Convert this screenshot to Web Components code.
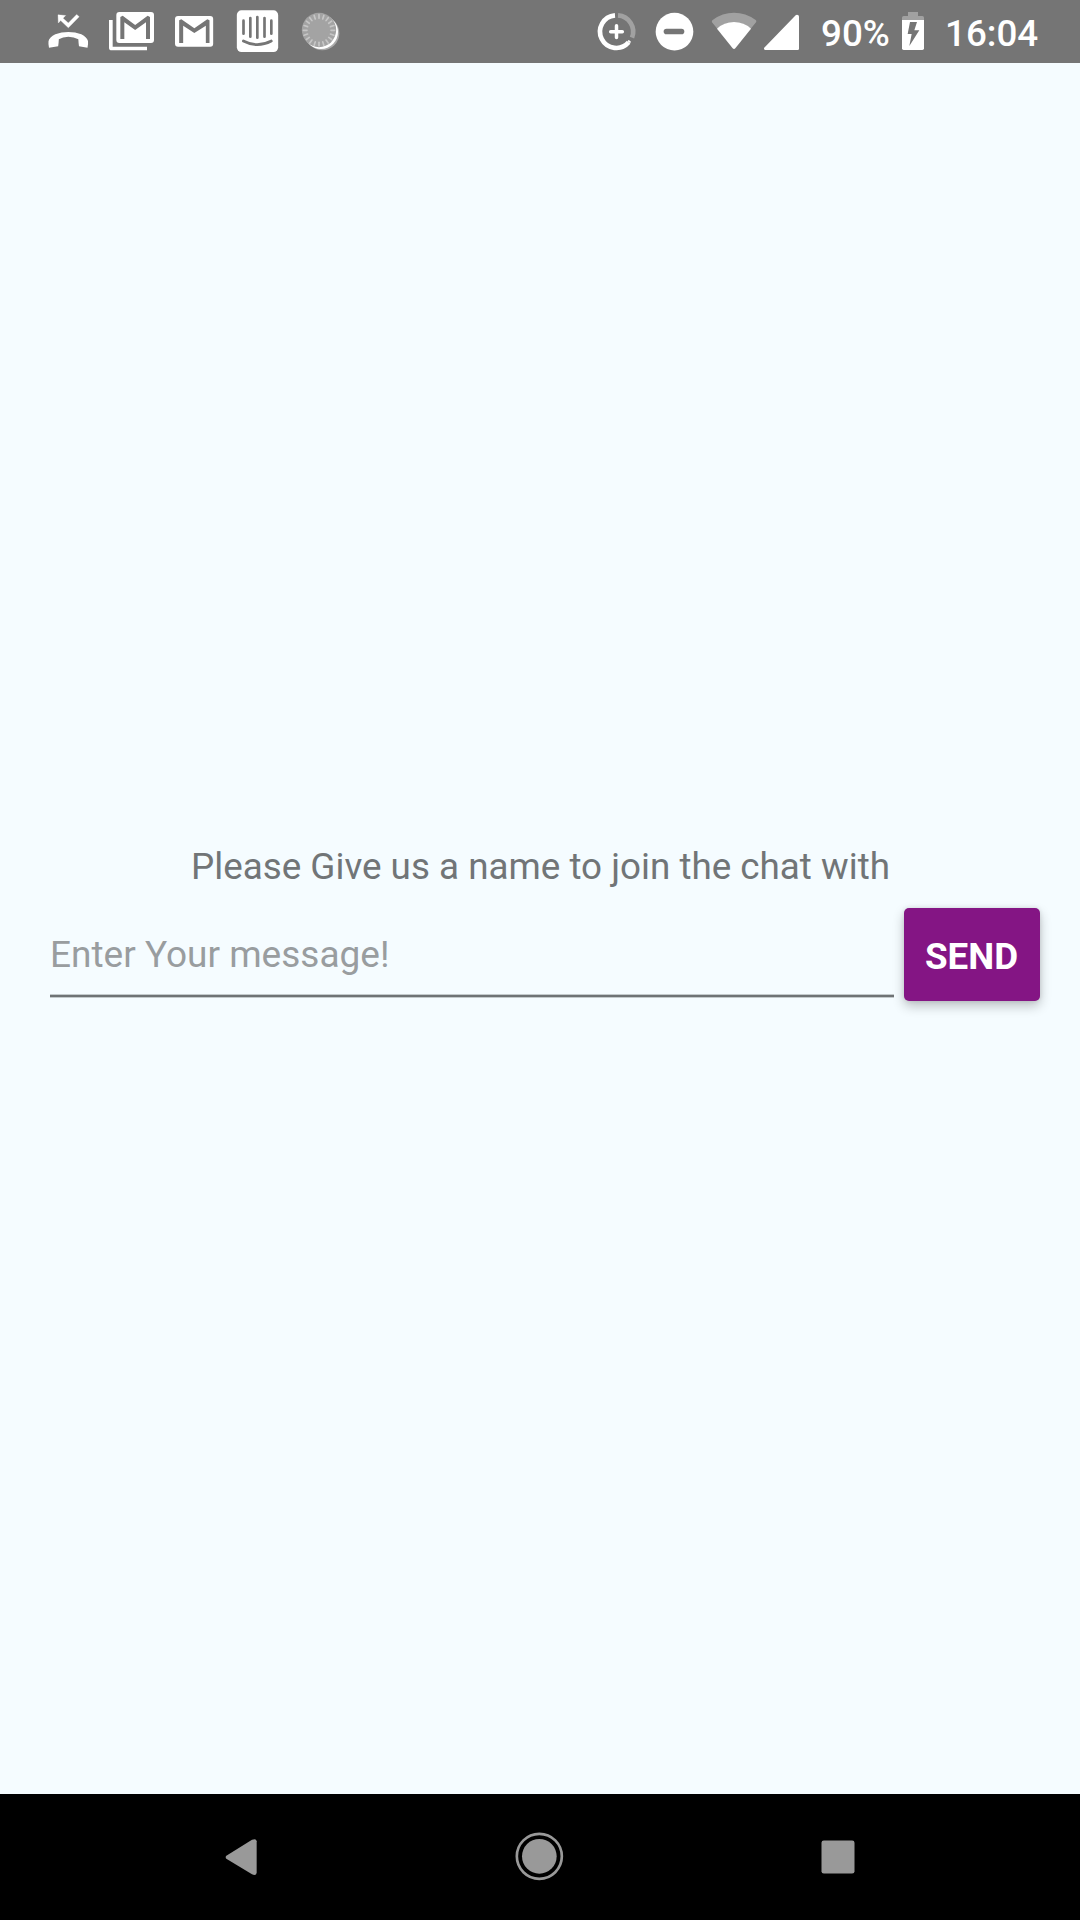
<!DOCTYPE html>
<html lang="en">
<head>
<meta charset="utf-8">
<title>Join the chat</title>
<style>
html,body{margin:0;padding:0;height:100%}
body{font-family:Roboto,"Noto Sans",sans-serif;background:#f5fcff;overflow:hidden}
</style>
</head>
<body>
<chat-app></chat-app>
<script>
const define = (name, html) => customElements.define(name, class extends HTMLElement {
  constructor() {
    super();
    this.attachShadow({ mode: 'open' }).innerHTML = html;
  }
});

const ticks = Array.from({ length: 20 }, (_, i) =>
  `<path d="M477 46V57" transform="rotate(${i * 18} 477 93)"/>`).join('');

const ICONS = {
  missed: [63, 63, '21 0 189 189', `<path d="M84 44.500L107 46.500L99 54.500L115 69L140 43.500L147.500 50L115 83.500L92 61.500L85 69Z" stroke="#fff" stroke-width="1"/><path d="M57 143Q54.500 133 55.500 124Q58 112 76 103Q94 96 115 96Q136 96 154 103Q171 112 174 123Q175 133 172.500 143L147 138.500Q145.500 130 145 118Q132 110.500 115 110.500Q98 110.500 86.500 118Q86 130 84.500 138.500Z"/>`],
  mailStack: [63, 63, '210 0 189 189', `<path d="M237 60H248V140H351V151H245Q237 151 237 143Z"/><path fill-rule="evenodd" d="M268 36H363Q372 36 372 45V120Q372 129 363 129H268Q259 129 259 120V45Q259 36 268 36ZM271 117H283V67L315.500 90L348 67V117H360V51L353 47L315.500 75L278 47L271 51Z"/>`],
  mail: [63, 63, '9 0 189 189', `<rect x="45" y="48" width="114.500" height="92" rx="9"/><path fill="#757575" d="M57.500 129V61L64 58L103 85L142 58L148.500 61V129H137.500V77L103 99L69.500 77V129Z"/>`],
  intercom: [63, 63, '198 0 189 189', `<rect x="230.500" y="31" width="124" height="125" rx="14"/><path fill="none" stroke="#757575" stroke-width="8" stroke-linecap="round" d="M250.500 62V101M271 54V110M292 51V113M313.500 54V110M334 62V101M250 123Q292 145 334 123"/>`],
  dial: [63, 63, '387 0 189 189', `<circle cx="487" cy="100" r="51" fill="#aaa"/><circle cx="483" cy="96" r="51"/><circle cx="477" cy="90" r="51.500" fill="#a3a3a3"/><g stroke="#c6c6c6" stroke-width="5" stroke-linecap="round" transform="translate(0 -2)">${ticks}</g>`],
  saver: [59, 63, '21 0 177 189', `<g fill="none" stroke="#fff" stroke-width="14"><path d="M105 46A49 49 0 1 0 146 127"/><path stroke-width="5" stroke-linecap="round" stroke-linejoin="round" d="M146 123L150 126"/><path stroke-opacity=".32" d="M114 46A49 49 0 0 1 156 113"/><path stroke-width="10.500" stroke-linecap="round" d="M92 95H127M109.500 77.500V112.500"/></g>`],
  dnd: [58, 63, '198 0 174 189', `<circle cx="283.500" cy="95" r="56.500"/><rect x="251" y="86" width="62" height="17" rx="8.500" fill="#757575"/>`],
  wifi: [56, 63, '372 0 168 189', `<path fill-opacity=".32" d="M396 67Q394 63 398 60Q427 38.500 462 38.500Q497 38.500 527 60Q531 63 528 67L511 88Q490 67 462 67Q434 67 413 88Z"/><path d="M411 86Q432 66 462 66Q492 66 513 86L466 145Q462 149 458 145Z"/>`],
  signal: [46, 63, '540 0 138 189', `<path d="M647 46Q650 43.500 653.500 45Q657 46 657 50V146Q657 150 653 150H555Q551 149 552 144Z"/>`],
  battery: [36, 63, '285 0 108 189', `<path fill-opacity=".32" d="M306 60V53Q306 48 311 48H324V36H354V48H367Q372 48 372 53V60Z"/><path d="M306 60H372V145Q372 150 367 150H311Q306 150 306 145Z"/><path fill="#757575" d="M330 66H351L343 91H358L328 138L335 102H323Z"/>`],
  back: [126, 126, '-66 42 378 378', `<path fill="#999" d="M79 227L156 179.500Q169 174 170 184V278Q169 288 156 283L79 236.500Q75 232 79 227Z"/>`],
  home: [126, 126, '828 42 378 378', `<circle cx="1018" cy="229" r="52" fill="#999"/><circle cx="1018" cy="229" r="67.500" fill="none" stroke="#999" stroke-width="8"/>`],
  recents: [126, 126, '822 42 378 378', `<rect x="964.500" y="181.500" width="99" height="99" rx="7" fill="#999"/>`]
};

customElements.define('ui-icon', class extends HTMLElement {
  constructor() {
    super();
    this.attachShadow({ mode: 'open' });
  }
  connectedCallback() {
    const [w, h, box, art] = ICONS[this.getAttribute('name')];
    this.shadowRoot.innerHTML = `<style>:host{display:block;flex:none}svg{display:block}</style>
      <svg width="${w}" height="${h}" viewBox="${box}" fill="#fff">${art}</svg>`;
  }
});

define('status-bar', `
<style>
:host{display:flex;flex:none;height:63px;background:#757575;color:#fff;box-sizing:border-box;padding:0 43px 0 37px;justify-content:space-between}
div{display:flex;align-items:center}
span{font:500 36.75px/43px Roboto,sans-serif;white-space:nowrap;padding-top:3px}
.level{width:74px;margin-left:15px}
.clock{width:92px;margin-left:14px}
</style>
<div><ui-icon name="missed"></ui-icon><ui-icon name="mailStack"></ui-icon><ui-icon name="mail"></ui-icon><ui-icon name="intercom"></ui-icon><ui-icon name="dial"></ui-icon></div>
<div><ui-icon name="saver"></ui-icon><ui-icon name="dnd"></ui-icon><ui-icon name="wifi"></ui-icon><ui-icon name="signal"></ui-icon><span class="level">90%</span><ui-icon name="battery"></ui-icon><span class="clock">16:04</span></div>`);

define('text-field', `
<style>
:host{display:flex;flex-direction:column;justify-content:flex-end;width:844px;height:90px;color:#999d9f}
span{font-size:37px;line-height:43px;padding-bottom:18px;white-space:nowrap}
i{height:4px;background:linear-gradient(#c3cacc 1px,#6f7375 1px 3px,#c3cacc 3px)}
</style>
<span><slot></slot></span><i></i>`);

define('send-button', `
<style>
:host{display:block}
button{display:flex;align-items:center;justify-content:center;width:136px;height:93px;padding:3px 1px 0 0;border:0;border-radius:5px;background:#841584;color:#fff;font:700 36.75px/43px Roboto,sans-serif;box-shadow:0 5px 12px rgba(0,0,0,.24),0 0 4px rgba(0,0,0,.1)}
</style>
<button type="button"><slot></slot></button>`);

define('join-form', `
<style>
:host{display:flex;flex:1;flex-direction:column;box-sizing:border-box;padding-top:782px;background:#f5fcff}
p{margin:0;padding-left:1px;text-align:center;font-size:36.8px;line-height:43px;height:63px;color:#717577}
.row{display:flex;align-items:flex-start;gap:10px;padding-left:50px}
</style>
<p>Please Give us a name to join the chat with</p>
<div class="row"><text-field>Enter Your message!</text-field><send-button>SEND</send-button></div>`);

define('nav-bar', `
<style>
:host{display:flex;flex:none;height:126px;box-sizing:border-box;background:#000;gap:172px;padding-left:178px}
</style>
<ui-icon name="back"></ui-icon><ui-icon name="home"></ui-icon><ui-icon name="recents"></ui-icon>`);

define('chat-app', `
<style>:host{display:flex;flex-direction:column;width:1080px;height:1920px}</style>
<status-bar></status-bar><join-form></join-form><nav-bar></nav-bar>`);
</script>
</body>
</html>
